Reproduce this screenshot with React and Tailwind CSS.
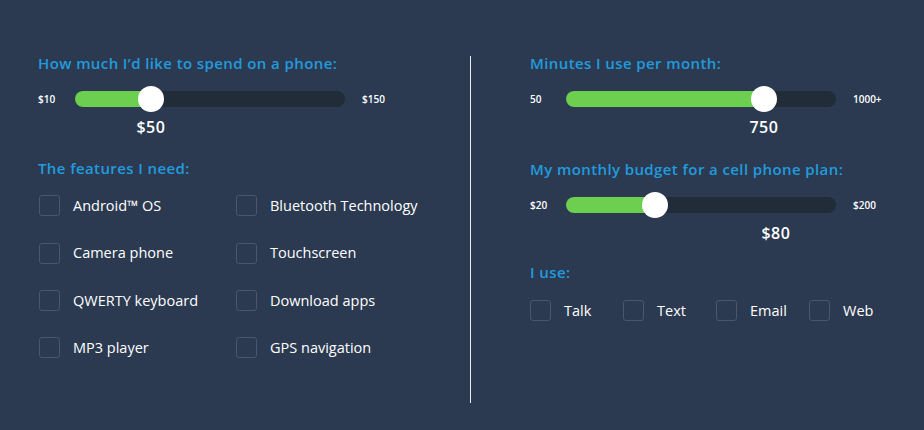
import React from "react";

const headingCls =
  "text-[15px] leading-[20px] font-semibold tracking-[0.4px] text-[#229ade] font-['Open_Sans',sans-serif]";

function Slider({ min, max, pct, value, valueLeft, labelW }) {
  return (
    <div>
      <div className="flex items-center h-[26px]">
        <div
          className="text-[10px] font-semibold text-white font-['Open_Sans',sans-serif]"
          style={{ width: labelW }}
        >
          {min}
        </div>
        <div className="relative w-[270px] h-[16px] rounded-full bg-[#222b38]">
          <div
            className="absolute left-0 top-0 h-[16px] rounded-full bg-[#6ccf4f]"
            style={{ width: pct + "%" }}
          />
          <div
            className="absolute top-1/2 w-[26px] h-[26px] rounded-full bg-white -translate-x-1/2 -translate-y-1/2"
            style={{ left: pct + "%" }}
          />
        </div>
        <div className="ml-[17px] text-[10px] font-semibold text-white font-['Open_Sans',sans-serif]">
          {max}
        </div>
      </div>
      <div className="relative h-[24px] mt-[3px]">
        <div
          className="absolute top-0 -translate-x-1/2 text-[16px] leading-[24px] font-semibold tracking-[0.6px] text-white font-['Open_Sans',sans-serif]"
          style={{ left: valueLeft }}
        >
          {value}
        </div>
      </div>
    </div>
  );
}

function Check({ label }) {
  return (
    <div className="flex items-center">
      <div className="w-[21px] h-[21px] rounded-[3px] border border-[#4b5668] shrink-0" />
      <span className="ml-[13px] text-[14.5px] text-white font-['Open_Sans',sans-serif]">{label}</span>
    </div>
  );
}

export default function App() {
  const features = [
    ["Android™ OS", "Bluetooth Technology"],
    ["Camera phone", "Touchscreen"],
    ["QWERTY keyboard", "Download apps"],
    ["MP3 player", "GPS navigation"],
  ];
  return (
    <div className="w-[924px] h-[430px] bg-[#2b3a50] flex pt-[53px] overflow-hidden">
      <div className="w-[470px] shrink-0 pl-[38px]">
        <div className={headingCls}>How much I’d like to spend on a phone:</div>
        <div className="mt-[13px]">
          <Slider min="$10" max="$150" pct={28} value="$50" valueLeft={113} labelW={37} />
        </div>
        <div className={headingCls + " mt-[19px]"}>The features I need:</div>
        <div className="mt-[4px] ml-[1px]">
          {features.map((row, i) => (
            <div key={i} className="flex items-center h-[47.4px]">
              <div className="w-[197px]">
                <Check label={row[0]} />
              </div>
              <Check label={row[1]} />
            </div>
          ))}
        </div>
      </div>
      <div className="w-[1px] h-[347px] mt-[3px] bg-[#e8ecf0] shrink-0" />
      <div className="pl-[59px]">
        <div className={headingCls}>Minutes I use per month:</div>
        <div className="mt-[13px]">
          <Slider min="50" max="1000+" pct={73.3} value="750" valueLeft={234} labelW={36} />
        </div>
        <div className={headingCls + " mt-[20px]"}>My monthly budget for a cell phone plan:</div>
        <div className="mt-[13px]">
          <Slider min="$20" max="$200" pct={33} value="$80" valueLeft={246} labelW={36} />
        </div>
        <div className={headingCls + " mt-[17px]"}>I use:</div>
        <div className="flex mt-[18px]">
          {["Talk", "Text", "Email", "Web"].map((t) => (
            <div key={t} className="w-[93px]">
              <Check label={t} />
            </div>
          ))}
        </div>
      </div>
    </div>
  );
}
